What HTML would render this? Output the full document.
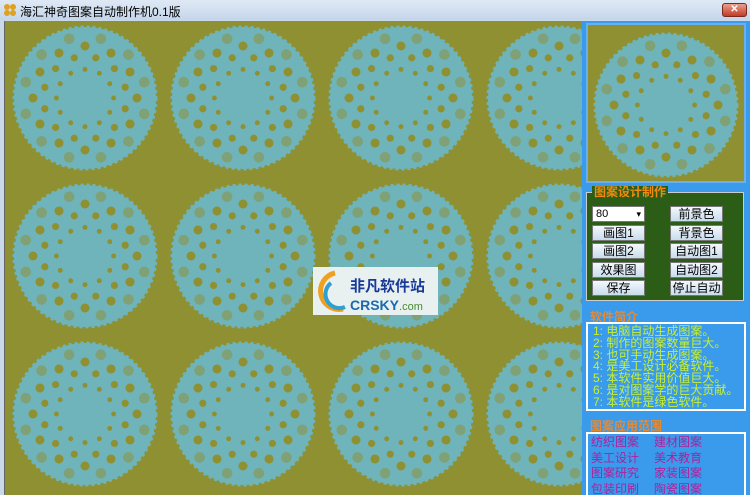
<!DOCTYPE html>
<html><head><meta charset="utf-8"><style>
*{margin:0;padding:0;box-sizing:border-box}
html,body{width:750px;height:495px;overflow:hidden}
body{background:#c9d9ea;font-family:"Liberation Sans","Noto Sans CJK SC",sans-serif;position:relative}
.title{position:absolute;left:0;top:0;width:750px;height:20px;background:linear-gradient(#dfe9f5,#c5d6ea);font-size:12px;color:#000}
.title span{position:absolute;left:20px;top:3px}
.close{position:absolute;left:722px;top:3px;width:25px;height:14px;background:linear-gradient(#e8a090,#c43b25);border:1px solid #7a2a1e;border-radius:3px;color:#fff;font-size:10px;text-align:center;line-height:12px;font-weight:bold}
.canvas{position:absolute;left:4px;top:21px;width:578px;height:474px;background:#8f9032;overflow:hidden;border-left:1px solid #666}
.panel{position:absolute;left:582px;top:21px;width:168px;height:474px;background:#3a9aec;overflow:hidden}
.prev{position:absolute;left:4px;top:2px;width:160px;height:160px;border:2px solid #6ab0f0;background:#8f9032;overflow:hidden}
.grp{position:absolute;left:4px;top:171px;width:158px;height:109px;background:#2b5d17;border:1px solid #ccc}
.grp .lg{position:absolute;left:5px;top:-7px;background:#2b5d17;color:#f08a10;font-size:12px;font-weight:bold;padding:0 2px;line-height:13px}
.btn{position:absolute;width:53px;height:16px;background:linear-gradient(#f4f8fc,#c8dcec);border:1px solid #777;font-size:12px;text-align:center;line-height:15px;color:#000}
.sel{position:absolute;left:5px;top:13px;width:53px;height:16px;background:#fff;border:1px solid #777;font-size:11px;line-height:14px;padding-left:3px}
.sel:after{content:"▾";position:absolute;right:3px;top:0;font-size:9px}
.h{position:absolute;left:8px;color:#e88a30;font-size:12px;font-weight:bold}
.box{position:absolute;left:4px;width:160px;border:2px solid #fff;font-size:12px;line-height:11.8px}
.info{top:301px;height:89px;color:#c8f030;padding:2px 5px}
.apps{top:411px;height:70px;color:#b0209a;padding:1px 3px;font-size:12px;line-height:15.5px}
.apps div{display:flex}.apps div span{width:63px}
</style></head><body>
<div class="title"><svg style="position:absolute;left:3px;top:3px" width="14" height="14"><circle cx="4" cy="4" r="3" fill="#e0a020"/><circle cx="10" cy="4" r="3" fill="#e0a020"/><circle cx="4" cy="10" r="3" fill="#e0a020"/><circle cx="10" cy="10" r="3" fill="#e0a020"/></svg><span>海汇神奇图案自动制作机0.1版</span><div class="close">✕</div></div>
<div class="canvas">
<svg width="578" height="474">
<defs>
<g id="m">
<circle r="71" fill="#6fb4ba" stroke="#6fb4ba" stroke-width="3" stroke-dasharray="3 3"/>
<g fill="#8f9032">
<g id="r1"><circle cx="0" cy="-52" r="4.5"/><circle cx="0" cy="-52" r="4.5" transform="rotate(30)"/><circle cx="0" cy="-52" r="4.5" transform="rotate(60)"/><circle cx="0" cy="-52" r="4.5" transform="rotate(90)"/><circle cx="0" cy="-52" r="4.5" transform="rotate(120)"/><circle cx="0" cy="-52" r="4.5" transform="rotate(150)"/><circle cx="0" cy="-52" r="4.5" transform="rotate(180)"/><circle cx="0" cy="-52" r="4.5" transform="rotate(210)"/><circle cx="0" cy="-52" r="4.5" transform="rotate(240)"/><circle cx="0" cy="-52" r="4.5" transform="rotate(270)"/><circle cx="0" cy="-52" r="4.5" transform="rotate(300)"/><circle cx="0" cy="-52" r="4.5" transform="rotate(330)"/></g>
<use href="#r1" transform="rotate(15) scale(0.8)"/>
<use href="#r1" transform="scale(0.55)"/>
<use href="#r1" transform="rotate(15) scale(1.18) scale(0.6 0.6) scale(1.667)" opacity="0.5"/>
</g>
</g>
</defs>
<use href="#m" x="80" y="77"/><use href="#m" x="238" y="77"/><use href="#m" x="396" y="77"/><use href="#m" x="554" y="77"/>
<use href="#m" x="80" y="235"/><use href="#m" x="238" y="235"/><use href="#m" x="396" y="235"/><use href="#m" x="554" y="235"/>
<use href="#m" x="80" y="393"/><use href="#m" x="238" y="393"/><use href="#m" x="396" y="393"/><use href="#m" x="554" y="393"/>
<rect x="308" y="246" width="125" height="48" fill="#e8f0f0"/>
<path d="M330 252 a18 18 0 1 0 8 36" fill="none" stroke="#f0a020" stroke-width="5"/>
<path d="M326 262 a14 14 0 0 0 14 24" fill="none" stroke="#30a0d0" stroke-width="4"/>
<text x="345" y="270" font-size="15" font-weight="bold" fill="#1a3a9a" font-family="Noto Sans CJK SC,sans-serif">非凡软件站</text>
<text x="345" y="289" font-size="14" font-weight="bold" fill="#1a6ab0" font-family="Liberation Sans">CRSKY<tspan font-weight="normal" font-size="11" fill="#4a8a30">.com</tspan></text>
</svg></div>
<div class="panel">
<div class="prev"><svg width="156" height="156"><use href="#m" x="78" y="80"/></svg></div>
<div class="grp"><div class="lg">图案设计制作</div>
<div class="sel">80</div>
<div class="btn" style="left:83px;top:13px">前景色</div>
<div class="btn" style="left:5px;top:32px">画图1</div>
<div class="btn" style="left:83px;top:32px">背景色</div>
<div class="btn" style="left:5px;top:50px">画图2</div>
<div class="btn" style="left:83px;top:50px">自动图1</div>
<div class="btn" style="left:5px;top:69px">效果图</div>
<div class="btn" style="left:83px;top:69px">自动图2</div>
<div class="btn" style="left:5px;top:87px">保存</div>
<div class="btn" style="left:83px;top:87px">停止自动</div>
</div>
<div class="h" style="top:287px">软件简介</div>
<div class="box info">1: 电脑自动生成图案。<br>2: 制作的图案数量巨大。<br>3: 也可手动生成图案。<br>4: 是美工设计必备软件。<br>5: 本软件实用价值巨大。<br>6: 是对图案学的巨大贡献。<br>7: 本软件是绿色软件。</div>
<div class="h" style="top:396px">图案应用范围</div>
<div class="box apps"><div><span>纺织图案</span><span>建材图案</span></div><div><span>美工设计</span><span>美术教育</span></div><div><span>图案研究</span><span>家装图案</span></div><div><span>包装印刷</span><span>陶瓷图案</span></div></div>
</div>
</body></html>
